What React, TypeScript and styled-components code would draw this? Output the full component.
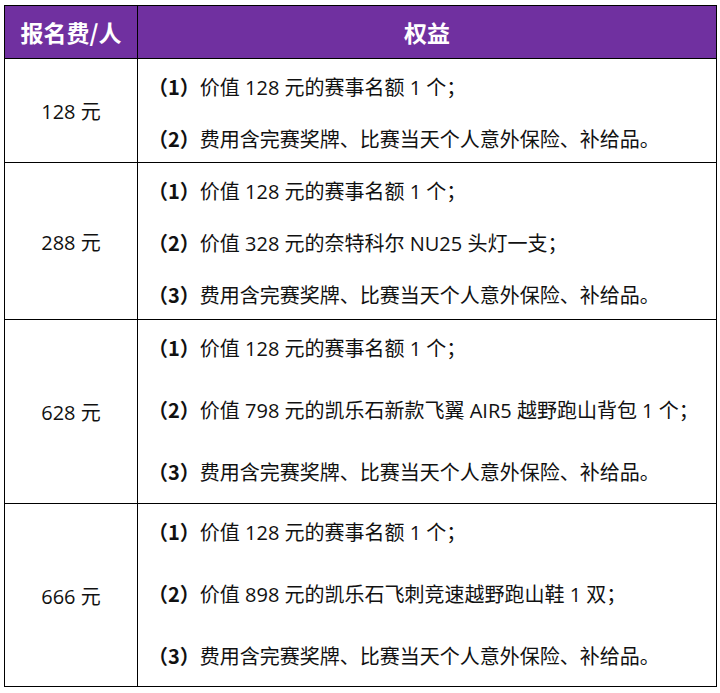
import React from "react";
import styled, { createGlobalStyle } from "styled-components";

const Global = createGlobalStyle`
  html, body { margin: 0; padding: 0; background: #ffffff; }
  body { font-family: "Open Sans", "Noto Sans CJK SC", sans-serif; color: #1a1a1a; }
`;

const Page = styled.div`
  padding: 5px 0 0 4px;
`;

const Table = styled.div`
  box-sizing: border-box;
  width: 713px;
  border: 1px solid #000;
  display: flex;
  flex-direction: column;
`;

const Row = styled.div<{ $h: number; $last?: boolean }>`
  box-sizing: border-box;
  display: grid;
  grid-template-columns: 133px 1fr;
  height: ${(p) => p.$h}px;
  border-bottom: ${(p) => (p.$last ? "none" : "1px solid #000")};
`;

const HeadRow = styled(Row)`
  background: #7030a0;
`;

const HeadCell = styled.div<{ $divider?: boolean }>`
  box-sizing: border-box;
  display: flex;
  align-items: center;
  justify-content: center;
  color: #ffffff;
  font-family: "Noto Sans CJK SC", sans-serif;
  font-weight: 700;
  font-size: 23px;
  border-right: ${(p) => (p.$divider ? "1px solid #000" : "none")};
  padding-bottom: 1px;
`;

const PriceCell = styled.div`
  box-sizing: border-box;
  display: flex;
  align-items: center;
  justify-content: center;
  border-right: 1px solid #000;
  font-size: 20px;
  color: #111;
`;

const BenefitCell = styled.div<{ $gap: number }>`
  box-sizing: border-box;
  display: flex;
  flex-direction: column;
  gap: ${(p) => p.$gap}px;
  padding: 13px 0 0 10px;
`;

const Item = styled.div`
  font-size: 20px;
  line-height: 30px;
  white-space: nowrap;
  color: #111;
`;

const Num = styled.span`
  font-weight: 700;
  font-family: "Noto Sans CJK SC", sans-serif;
`;

const COMMON = "费用含完赛奖牌、比赛当天个人意外保险、补给品。";
const FIRST = "价值 128 元的赛事名额 1 个；";

const rows = [
  { price: "128 元", h: 104, gap: 21, items: [FIRST, COMMON] },
  {
    price: "288 元",
    h: 157,
    gap: 21,
    items: [FIRST, "价值 328 元的奈特科尔 NU25 头灯一支；", COMMON],
  },
  {
    price: "628 元",
    h: 184,
    gap: 31,
    items: [FIRST, "价值 798 元的凯乐石新款飞翼 AIR5 越野跑山背包 1 个；", COMMON],
  },
  {
    price: "666 元",
    h: 182,
    gap: 31,
    items: [FIRST, "价值 898 元的凯乐石飞刺竞速越野跑山鞋 1 双；", COMMON],
  },
];

export default function App() {
  return (
    <>
      <Global />
      <Page>
        <Table>
          <HeadRow $h={53}>
            <HeadCell $divider>报名费/人</HeadCell>
            <HeadCell>权益</HeadCell>
          </HeadRow>
          {rows.map((r, i) => (
            <Row key={r.price} $h={r.h} $last={i === rows.length - 1}>
              <PriceCell>{r.price}</PriceCell>
              <BenefitCell $gap={r.gap}>
                {r.items.map((t, j) => (
                  <Item key={j}>
                    <Num>（{j + 1}）</Num>
                    {t}
                  </Item>
                ))}
              </BenefitCell>
            </Row>
          ))}
        </Table>
      </Page>
    </>
  );
}
